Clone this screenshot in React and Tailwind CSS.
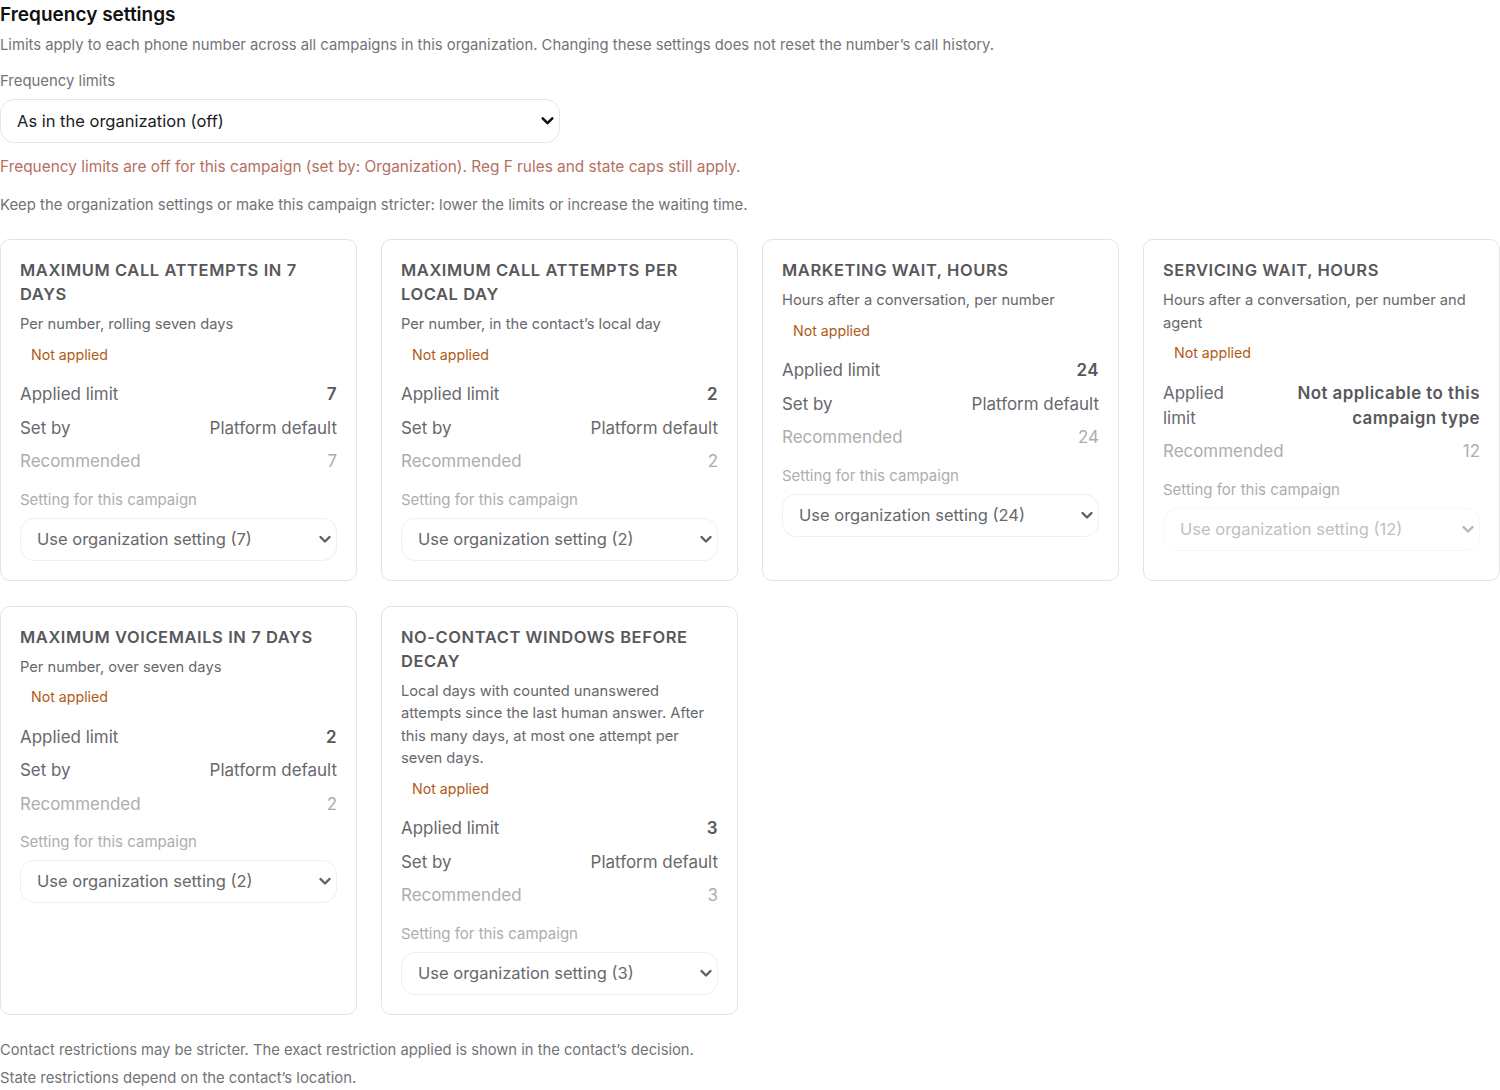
const cards = [
  {
    title: "Maximum call attempts in 7 days",
    desc: "Per number, rolling seven days",
    applied: "7",
    setBy: "Platform default",
    recommended: "7",
    option: "Use organization setting (7)",
  },
  {
    title: "Maximum call attempts per local day",
    desc: "Per number, in the contact’s local day",
    applied: "2",
    setBy: "Platform default",
    recommended: "2",
    option: "Use organization setting (2)",
  },
  {
    title: "Marketing wait, hours",
    desc: "Hours after a conversation, per number",
    applied: "24",
    setBy: "Platform default",
    recommended: "24",
    option: "Use organization setting (24)",
  },
  {
    title: "Servicing wait, hours",
    desc: "Hours after a conversation, per number and agent",
    applied: "Not applicable to this campaign type",
    recommended: "12",
    option: "Use organization setting (12)",
    disabled: true,
  },
  {
    title: "Maximum voicemails in 7 days",
    desc: "Per number, over seven days",
    applied: "2",
    setBy: "Platform default",
    recommended: "2",
    option: "Use organization setting (2)",
  },
  {
    title: "No-contact windows before decay",
    desc: "Local days with counted unanswered attempts since the last human answer. After this many days, at most one attempt per seven days.",
    applied: "3",
    setBy: "Platform default",
    recommended: "3",
    option: "Use organization setting (3)",
  },
];

const Chevron = ({ className }) => (
  <svg
    className={className}
    viewBox="0 0 14 14"
    fill="none"
    stroke="currentColor"
    strokeWidth="2.4"
    strokeLinecap="round"
    strokeLinejoin="round"
  >
    <path d="M2.5 5l4.5 4.5L11.5 5" />
  </svg>
);

const LimitCard = ({ card }) => {
  return (
    <div className="rounded-[10px] border border-[#e3e3e3] bg-white px-[19px] pt-[18px] pb-[19px]">
      <h3 className="text-[16.5px] leading-6 font-semibold uppercase tracking-[0.035em] text-[#58585b]">
        {card.title}
      </h3>
      <p className="mt-[7px] text-[14.7px] leading-[22.5px] text-[#68686c]">
        {card.desc}
      </p>
      <div className="mt-[8px] pl-[11px] text-[14.2px] leading-[22px] text-[#b05a16]">
        Not applied
      </div>
      <div className="mt-[16.5px] flex flex-col gap-[8.5px] text-[16.95px] leading-[25px]">
        <div className="flex justify-between gap-4 text-[#68686c]">
          <span>Applied limit</span>
          <span className="text-right font-semibold tracking-[0.45px] text-[#58585b]">
            {card.applied}
          </span>
        </div>
        {card.setBy && (
          <div className="flex justify-between gap-4 text-[#68686c]">
            <span>Set by</span>
            <span>{card.setBy}</span>
          </div>
        )}
        <div className="flex justify-between gap-4 text-[#adadb0]">
          <span>Recommended</span>
          <span>{card.recommended}</span>
        </div>
      </div>
      <div className="mt-[14.5px] text-[15px] leading-[22px] text-[#adadb0]">
        Setting for this campaign
      </div>
      <div className="relative mt-[7px]">
        <select
          disabled={card.disabled}
          className={
            card.disabled
              ? "h-[43px] w-full appearance-none rounded-[14px] border border-[#f7f7f7] bg-white pl-4 text-[16.5px] text-[#c0c0c2] opacity-100 outline-none"
              : "h-[43px] w-full appearance-none rounded-[14px] border border-[#efefef] bg-white pl-4 text-[16.5px] text-[#68686c] outline-none"
          }
        >
          <option>{card.option}</option>
        </select>
        <Chevron
          className={
            card.disabled
              ? "pointer-events-none absolute top-[14px] right-[5px] h-[14px] w-[14px] text-[#b5b5b7]"
              : "pointer-events-none absolute top-[14px] right-[5px] h-[14px] w-[14px] text-[#5f5f63]"
          }
        />
      </div>
    </div>
  );
};

export default function App() {
  return (
    <div className="h-[1090px] overflow-hidden bg-white font-['Inter',sans-serif]">
      <h2 className="pt-[3px] text-[19px] leading-6 font-semibold text-[#111111]">
        Frequency settings
      </h2>
      <p className="mt-[7px] text-[14.8px] leading-[22px] text-[#737377]">
        Limits apply to each phone number across all campaigns in this
        organization. Changing these settings does not reset the number’s call
        history.
      </p>
      <div className="mt-[14px] text-[14.9px] leading-[22px] text-[#737377]">
        Frequency limits
      </div>
      <div className="relative mt-[7px] w-[560px]">
        <select className="h-[44px] w-full appearance-none rounded-[14px] border border-[#e6e6e6] bg-white pl-4 text-[16.5px] text-[#1c1c1e] outline-none">
          <option>As in the organization (off)</option>
        </select>
        <Chevron className="pointer-events-none absolute top-[14px] right-[5px] h-[15px] w-[15px] text-[#111111]" />
      </div>
      <p className="mt-[13px] text-[15.4px] leading-[22px] text-[#b5705f]">
        Frequency limits are off for this campaign (set by: Organization). Reg F
        rules and state caps still apply.
      </p>
      <p className="mt-[16px] text-[14.9px] leading-[22px] text-[#737377]">
        Keep the organization settings or make this campaign stricter: lower the
        limits or increase the waiting time.
      </p>
      <div className="mt-[23px] grid grid-cols-4 gap-x-6 gap-y-[25px]">
        {cards.map((card) => (
          <LimitCard key={card.title} card={card} />
        ))}
      </div>
      <p className="mt-6 text-[14.75px] leading-[22px] text-[#737377]">
        Contact restrictions may be stricter. The exact restriction applied is
        shown in the contact’s decision.
      </p>
      <p className="mt-[6px] text-[14.85px] leading-[22px] text-[#737377]">
        State restrictions depend on the contact’s location.
      </p>
    </div>
  );
}
